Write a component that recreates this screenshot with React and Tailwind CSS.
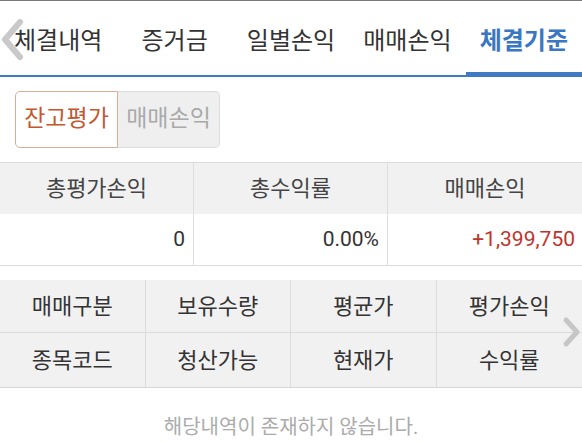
import React from "react";

export default function App() {
  const tabs = ["체결내역", "증거금", "일별손익", "매매손익", "체결기준"];
  const active = 4;
  return (
    <div className="relative w-[582px] h-[442px] bg-white overflow-hidden font-['Roboto','Noto_Sans_CJK_KR',sans-serif]">
      {/* Tabs */}
      <div className="border-t border-[#7a7a7a] flex h-[77px]">
        {tabs.map((t, i) => (
          <div key={t} className="flex-1 flex flex-col">
            <div
              className={
                "flex-1 flex items-center justify-center pt-[8px] text-[24px] leading-none " +
                (i === active ? "text-[#3a77c2] font-bold" : "text-[#333]")
              }
            >
              {t}
            </div>
            <div className="h-[5px] flex flex-col justify-end">
              <div className={(i === active ? "h-[5px]" : "h-[2px]") + " bg-[#3f7bc3]"} />
            </div>
          </div>
        ))}
      </div>
      <svg className="absolute left-0 top-[19px]" width="24" height="42" viewBox="0 0 24 42">
        <path d="M20 3 L5 20.5 L20 38" fill="none" stroke="#c9c9c9" strokeWidth="6" strokeLinecap="round" strokeLinejoin="round" />
      </svg>

      {/* Toggle */}
      <div className="mt-[14px] ml-[15px] flex w-[205px] h-[57px]">
        <div className="flex-1 flex items-center justify-center border border-[#d8ac96] rounded-l-[5px] bg-white text-[23px] text-[#c4572e]">
          잔고평가
        </div>
        <div className="flex-1 flex items-center justify-center border border-l-0 border-[#dcdcdc] rounded-r-[5px] bg-[#efefef] text-[23px] text-[#a9a9a9]">
          매매손익
        </div>
      </div>

      {/* Summary */}
      <div className="mt-[14px] border-t border-b border-[#dcdcdc]">
        <div className="grid grid-cols-3 h-[51px] bg-[#f1f1f1] text-[22px] text-[#444]">
          <div className="flex items-center justify-center border-r border-[#dedede]">총평가손익</div>
          <div className="flex items-center justify-center border-r border-[#dedede]">총수익률</div>
          <div className="flex items-center justify-center">매매손익</div>
        </div>
        <div className="grid grid-cols-3 h-[51px] bg-white text-[21px] text-[#333]">
          <div className="flex items-center justify-end pr-[8px] border-r border-[#dedede]">0</div>
          <div className="flex items-center justify-end pr-[8px] border-r border-[#dedede]">0.00%</div>
          <div className="flex items-center justify-end pr-[7px] text-[#c0342f]">+1,399,750</div>
        </div>
      </div>

      {/* Columns table */}
      <div className="mt-[14px] bg-[#f1f1f1] border-b border-[#d6d6d6] text-[22px] text-[#333]">
        <div className="grid grid-cols-4 h-[53px] border-b border-[#dcdcdc]">
          <div className="flex items-center justify-center border-r border-[#dcdcdc]">매매구분</div>
          <div className="flex items-center justify-center border-r border-[#dcdcdc]">보유수량</div>
          <div className="flex items-center justify-center border-r border-[#dcdcdc]">평균가</div>
          <div className="flex items-center justify-center">평가손익</div>
        </div>
        <div className="grid grid-cols-4 h-[54px]">
          <div className="flex items-center justify-center border-r border-[#dcdcdc]">종목코드</div>
          <div className="flex items-center justify-center border-r border-[#dcdcdc]">청산가능</div>
          <div className="flex items-center justify-center border-r border-[#dcdcdc]">현재가</div>
          <div className="flex items-center justify-center">수익률</div>
        </div>
      </div>
      <svg className="absolute left-[561px] top-[316px]" width="21" height="32" viewBox="0 0 21 32">
        <path d="M5 4 L16 16 L5 28" fill="none" stroke="#c6c6c6" strokeWidth="5" strokeLinecap="round" strokeLinejoin="round" />
      </svg>

      {/* Empty */}
      <div className="mt-[24px] text-center text-[20px] text-[#ababab]">해당내역이 존재하지 않습니다.</div>
    </div>
  );
}
